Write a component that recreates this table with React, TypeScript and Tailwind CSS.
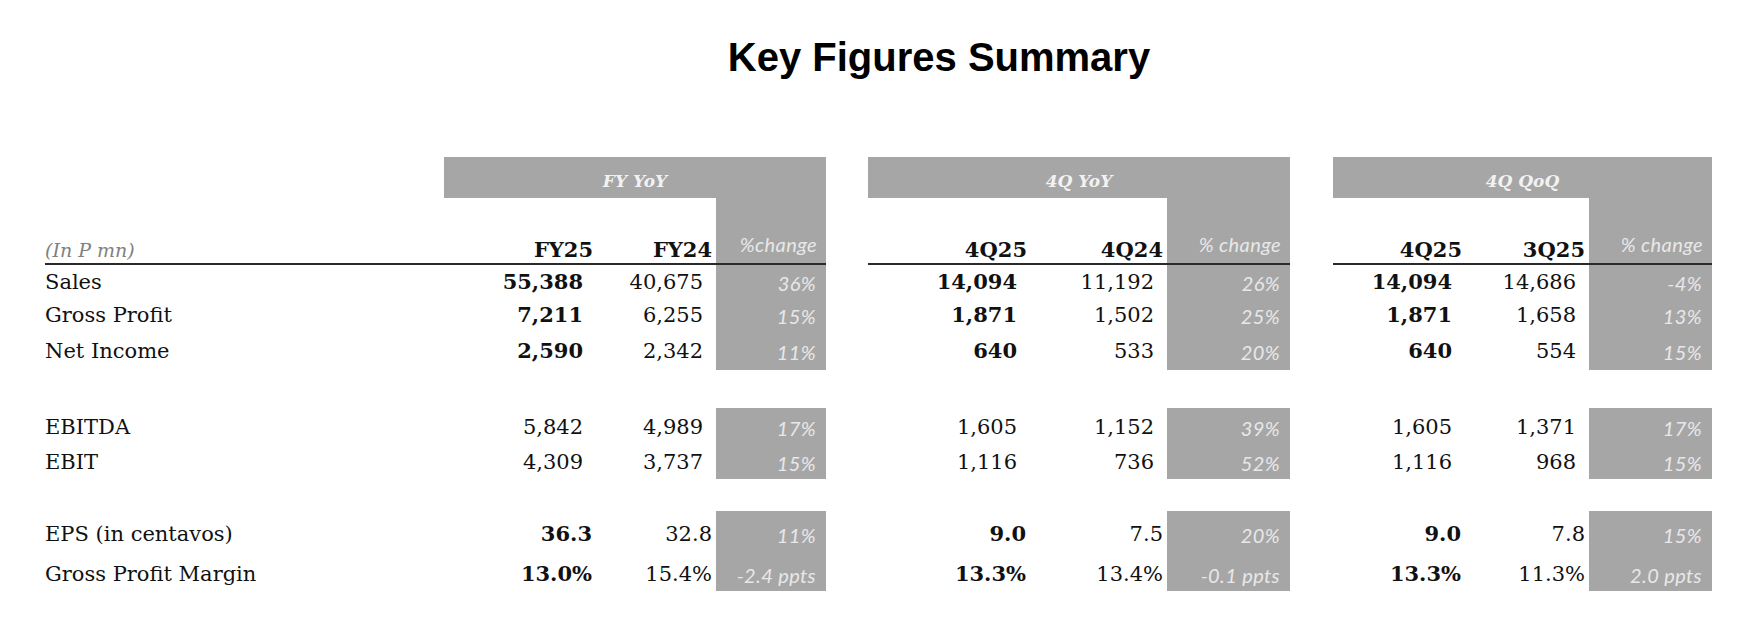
import React from 'react';

const GRID = 'grid grid-cols-[399px_152px_120px_110px_42px_162px_137px_123px_43px_132px_124px_123px]';
const SERIF = "font-['DejaVu_Serif',serif]";
const PCT = "font-['Lato',sans-serif] italic text-[20px] tracking-[0.4px] text-[#e8e8e8]";

type Group = [string, string, string];

interface RowDef {
  label: string;
  h: string;
  groups: [Group, Group, Group];
  boldA: boolean;
  dec?: boolean;
}

const TOP: RowDef[] = [
  { label: 'Sales', h: 'h-[33px]', boldA: true, groups: [['55,388', '40,675', '36%'], ['14,094', '11,192', '26%'], ['14,094', '14,686', '-4%']] },
  { label: 'Gross Profit', h: 'h-[34px]', boldA: true, groups: [['7,211', '6,255', '15%'], ['1,871', '1,502', '25%'], ['1,871', '1,658', '13%']] },
  { label: 'Net Income', h: 'h-[38px]', boldA: true, groups: [['2,590', '2,342', '11%'], ['640', '533', '20%'], ['640', '554', '15%']] },
];

const MID: RowDef[] = [
  { label: 'EBITDA', h: 'h-[37px]', boldA: false, groups: [['5,842', '4,989', '17%'], ['1,605', '1,152', '39%'], ['1,605', '1,371', '17%']] },
  { label: 'EBIT', h: 'h-[34px]', boldA: false, groups: [['4,309', '3,737', '15%'], ['1,116', '736', '52%'], ['1,116', '968', '15%']] },
];

const LOW: RowDef[] = [
  { label: 'EPS (in centavos)', h: 'h-[45px]', boldA: true, dec: true, groups: [['36.3', '32.8', '11%'], ['9.0', '7.5', '20%'], ['9.0', '7.8', '15%']] },
  { label: 'Gross Profit Margin', h: 'h-[35px]', boldA: true, dec: true, groups: [['13.0%', '15.4%', '-2.4 ppts'], ['13.3%', '13.4%', '-0.1 ppts'], ['13.3%', '11.3%', '2.0 ppts']] },
];

function DataRow({ row }: { row: RowDef }) {
  const pad = row.dec ? 'pr-[4px]' : 'pr-[13px]';
  return (
    <div className={`${GRID} ${row.h} items-stretch`}>
      <div className="flex items-center leading-[24px]">{row.label}</div>
      {row.groups.map((g, i) => (
        <React.Fragment key={i}>
          <div className={`flex items-center justify-end leading-[24px] ${pad} ${row.boldA ? 'font-bold' : ''}`}>{g[0]}</div>
          <div className={`flex items-center justify-end leading-[24px] ${pad}`}>{g[1]}</div>
          <div className="flex items-center justify-end bg-[#a6a6a6] pr-[10px]">
            <span className={`${PCT} translate-y-[1px]`}>{g[2]}</span>
          </div>
          {i < 2 && <div />}
        </React.Fragment>
      ))}
    </div>
  );
}

const BANDS = ['FY YoY', '4Q YoY', '4Q QoQ'];
const HEADS: [string, string, string][] = [
  ['FY25', 'FY24', '%change'],
  ['4Q25', '4Q24', '% change'],
  ['4Q25', '3Q25', '% change'],
];

export default function App() {
  return (
    <div className={`w-[1756px] h-[628px] bg-white text-[#111] ${SERIF} text-[21px]`}>
      <h1 className="pt-[37px] pl-[122px] text-center font-['Liberation_Sans',Arial,sans-serif] font-bold text-[40px] leading-[40px] text-black">
        Key Figures Summary
      </h1>

      <div className="pl-[45px] mt-[80px]">
        {/* group band */}
        <div className={`${GRID} h-[41px]`}>
          <div />
          {BANDS.map((b, i) => (
            <React.Fragment key={b}>
              <div className="col-span-3 flex items-center justify-center bg-[#a6a6a6] pt-[8px]">
                <span className="italic font-bold text-[17px] text-[#f2f2f2]">{b}</span>
              </div>
              {i < 2 && <div />}
            </React.Fragment>
          ))}
        </div>

        {/* column headers */}
        <div className={`${GRID} h-[67px]`}>
          <div className="flex items-end pb-[1px] leading-[24px] border-b-2 border-[#2a2a2a] italic text-[19px] text-[#808080]">(In P mn)</div>
          {HEADS.map((h, i) => (
            <React.Fragment key={i}>
              <div className="flex items-end justify-end pb-[1px] pr-[3px] leading-[24px] font-bold border-b-2 border-[#2a2a2a]">{h[0]}</div>
              <div className="flex items-end justify-end pb-[1px] pr-[4px] leading-[24px] font-bold border-b-2 border-[#2a2a2a]">{h[1]}</div>
              <div className="flex items-end justify-end pb-[4px] pr-[9px] bg-[#a6a6a6] border-b-2 border-[#2a2a2a]">
                <span className={PCT}>{h[2]}</span>
              </div>
              {i < 2 && <div />}
            </React.Fragment>
          ))}
        </div>

        {TOP.map(r => <DataRow key={r.label} row={r} />)}
        <div className="h-[38px]" />
        {MID.map(r => <DataRow key={r.label} row={r} />)}
        <div className="h-[32px]" />
        {LOW.map(r => <DataRow key={r.label} row={r} />)}
      </div>
    </div>
  );
}
